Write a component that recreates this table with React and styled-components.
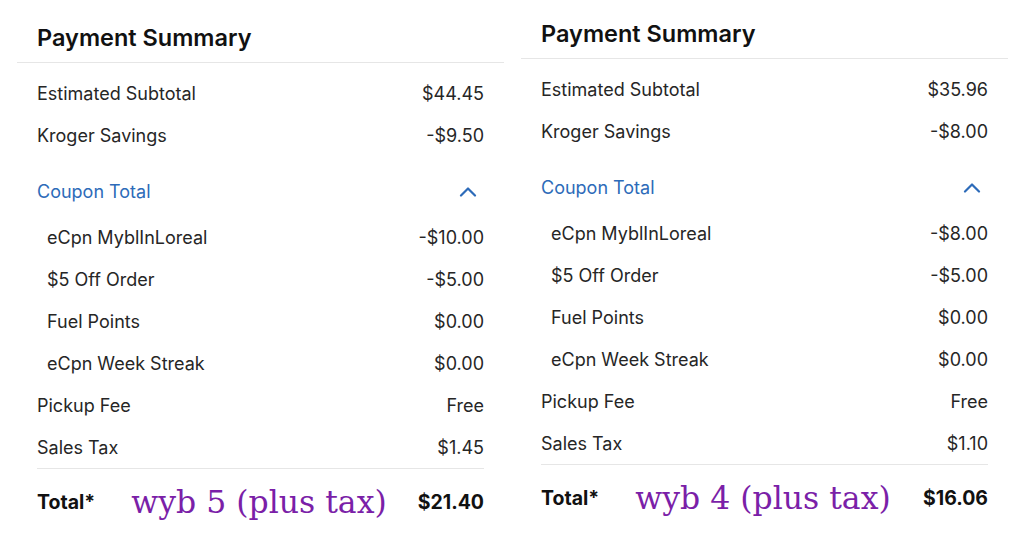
import styled, { createGlobalStyle } from 'styled-components';

const Global = createGlobalStyle`
    body {
        margin: 0;
        background: #ffffff;
        font-family: Inter, "Liberation Sans", sans-serif;
    }
`;

const Page = styled.div`
    display: flex;
    align-items: flex-start;
    gap: 17px;
    width: 1024px;
    height: 536px;
    padding-left: 17px;
    box-sizing: border-box;
    overflow: hidden;
`;

const Panel = styled.div`
    width: 487px;
    padding-top: ${p => p.$top}px;
`;

const Title = styled.div`
    padding: 0 20px 5px;
    line-height: 39px;
    font-size: 23.5px;
    font-weight: 600;
    color: #111111;
    border-bottom: 1px solid #e6e6e6;
    margin-bottom: 9px;
`;

const Body = styled.div`
    padding: 0 20px;
`;

const Row = styled.div`
    display: flex;
    align-items: center;
    justify-content: space-between;
    height: 42px;
    padding-left: ${p => (p.$indent ? 10 : 0)}px;
    font-size: 18px;
    color: #262626;
`;

const CouponHead = styled(Row)`
    height: 50px;
    margin-top: 10px;
    color: #2d6bb9;
`;

const Chevron = styled.svg`
    width: 18px;
    height: 11px;
    margin-right: 7px;
`;

const TotalRow = styled.div`
    display: flex;
    align-items: center;
    height: 66px;
    border-top: 1px solid #e6e6e6;
    font-size: 19.5px;
    font-weight: 700;
    color: #111111;
`;

const Note = styled.span`
    margin-left: 36px;
    font-family: "DejaVu Serif", "Liberation Serif", serif;
    font-weight: 400;
    font-size: 31.5px;
    color: #7b1fa8;
`;

const Amount = styled.span`
    margin-left: auto;
`;

const panels = [
    {
        top: 18,
        subtotal: '$44.45',
        savings: '-$9.50',
        coupons: [
            ['eCpn MyblInLoreal', '-$10.00'],
            ['$5 Off Order', '-$5.00'],
            ['Fuel Points', '$0.00'],
            ['eCpn Week Streak', '$0.00'],
        ],
        tax: '$1.45',
        note: 'wyb 5 (plus tax)',
        total: '$21.40',
    },
    {
        top: 14,
        subtotal: '$35.96',
        savings: '-$8.00',
        coupons: [
            ['eCpn MyblInLoreal', '-$8.00'],
            ['$5 Off Order', '-$5.00'],
            ['Fuel Points', '$0.00'],
            ['eCpn Week Streak', '$0.00'],
        ],
        tax: '$1.10',
        note: 'wyb 4 (plus tax)',
        total: '$16.06',
    },
];

const Summary = ({ data }) => (
    <Panel $top={data.top}>
        <Title>Payment Summary</Title>
        <Body>
            <Row><span>Estimated Subtotal</span><span>{data.subtotal}</span></Row>
            <Row><span>Kroger Savings</span><span>{data.savings}</span></Row>
            <CouponHead>
                <span>Coupon Total</span>
                <Chevron viewBox="0 0 18 11">
                    <path d="M2 9.5 L9 2.5 L16 9.5" fill="none" stroke="#2d6bb9" strokeWidth="2.2" strokeLinecap="round" strokeLinejoin="round" />
                </Chevron>
            </CouponHead>
            {data.coupons.map(([label, value]) => (
                <Row $indent key={label}><span>{label}</span><span>{value}</span></Row>
            ))}
            <Row><span>Pickup Fee</span><span>Free</span></Row>
            <Row><span>Sales Tax</span><span>{data.tax}</span></Row>
            <TotalRow>
                <span>Total*</span>
                <Note>{data.note}</Note>
                <Amount>{data.total}</Amount>
            </TotalRow>
        </Body>
    </Panel>
);

const App = () => (
    <Page>
        <Global />
        {panels.map(p => <Summary key={p.total} data={p} />)}
    </Page>
);

export default App;
